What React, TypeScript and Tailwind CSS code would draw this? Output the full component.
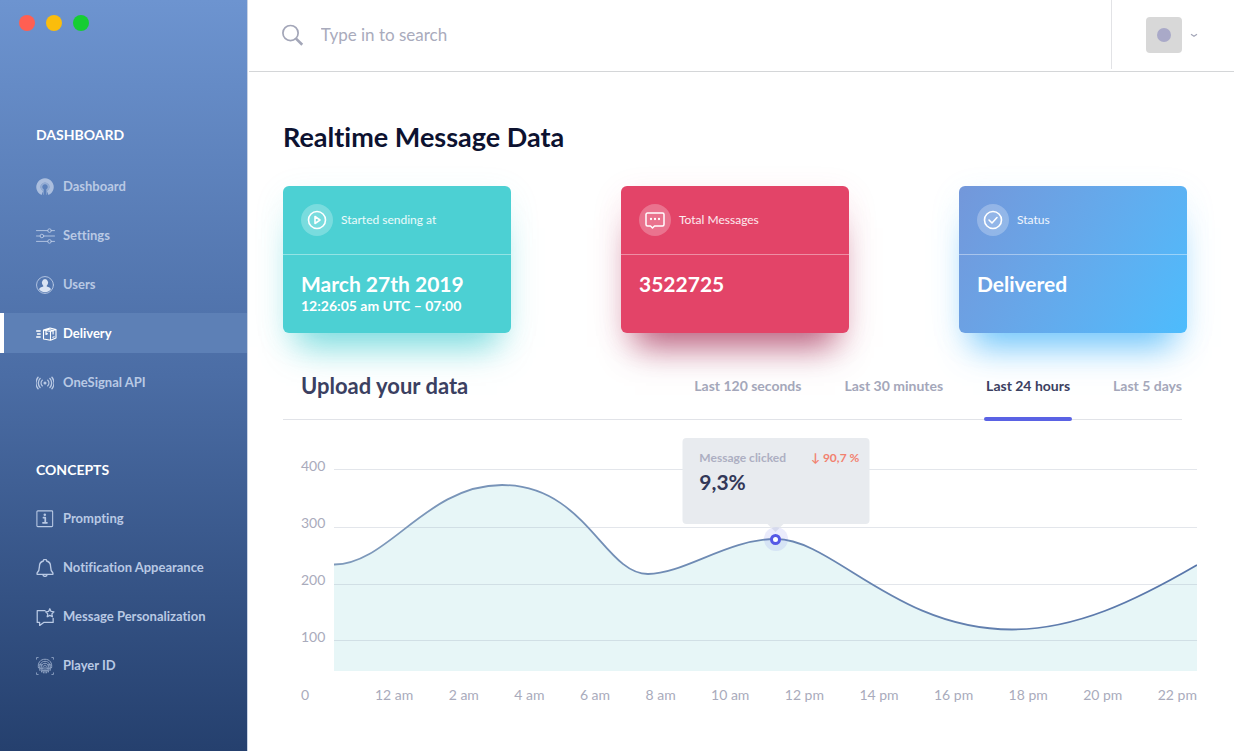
import React from "react";

type IconProps = { children: React.ReactNode; className?: string };

function Icon({ children, className = "size-[18px]" }: IconProps) {
  return (
    <svg
      viewBox="0 0 20 20"
      fill="none"
      stroke="currentColor"
      strokeLinecap="round"
      strokeLinejoin="round"
      aria-hidden="true"
      className={`shrink-0 ${className}`}
    >
      {children}
    </svg>
  );
}

const SignalLogo = () => (
  <Icon className="size-[18px]">
    <path
      d="M6.200 19A9.700 9.700 0 1 1 13.800 19L12.100 14.500A5 5 0 1 0 7.900 14.500Z"
      fill="currentColor"
      stroke="none"
      opacity="0.85"
    />
    <path
      d="M8.600 18.500V12.500A3 3 0 1 1 11.400 12.500V18.500H12.100V14.500A5 5 0 1 0 7.900 14.500V18.500Z"
      fill="currentColor"
      stroke="none"
      opacity="0.6"
    />
  </Icon>
);

const Sliders = () => (
  <Icon className="h-[18px] w-[19px]">
    <path d="M0 4h12.500M16.500 4H20M0 10h4M8 10H20M0 16h12.500M16.500 16H20" />
    <circle cx="14.500" cy="4" r="2" />
    <circle cx="6" cy="10" r="2" />
    <circle cx="14.500" cy="16" r="2" />
  </Icon>
);

const User = () => (
  <Icon>
    <circle cx="10" cy="10" r="9.400" />
    <path
      d="M10 3.300a3.700 4.100 0 0 1 1.900 7.400v1.100c2.400.5 4.200 1.400 4.700 3a8.200 8.200 0 0 1-13.200 0c.5-1.600 2.300-2.500 4.700-3v-1.100A3.700 4.100 0 0 1 10 3.300Z"
      fill="#dbe4f3"
      stroke="none"
    />
  </Icon>
);

const Parcel = () => (
  <svg
    viewBox="0 0 22 18"
    fill="none"
    stroke="currentColor"
    strokeLinecap="round"
    strokeLinejoin="round"
    aria-hidden="true"
    className="h-[18px] w-[22px] shrink-0"
  >
    <path d="M.6 6h3.600M1.500 9h2.700M.6 12h3.600" strokeWidth="1.300" />
    <path
      d="M7.500 5 14 3l6 1.600V13l-5.500 2.300L7.500 14ZM7.500 5l7 1.500L20 4.600M14.500 6.500v8.800M10.800 4l6.300 1.600V9M13 3.500 10 5.500v4l1.500-.8M16.800 12.300l1.400-.6"
      strokeWidth="1.100"
    />
  </svg>
);

const Broadcast = () => (
  <Icon>
    <circle cx="10" cy="10" r="1.700" fill="currentColor" stroke="none" />
    <path
      d="M7 6.800a4.600 4.600 0 0 0 0 6.400M13 6.800a4.600 4.600 0 0 1 0 6.400M4.600 4.900a7.500 7.500 0 0 0 0 10.200M15.400 4.900a7.500 7.500 0 0 1 0 10.200M2.300 3.600a10.500 10.500 0 0 0 0 12.800M17.700 3.600a10.500 10.500 0 0 1 0 12.800"
      strokeWidth="1.500"
    />
  </Icon>
);

const Info = () => (
  <Icon>
    <rect x="1" y="1" width="17.500" height="17.500" rx="1" strokeWidth="1.200" />
    <path d="M8.300 8.500h2v5.500M7.700 14.200h4.500" strokeWidth="1.900" />
    <circle cx="9.800" cy="5.300" r="1.400" fill="currentColor" stroke="none" />
  </Icon>
);

const Bell = () => (
  <Icon>
    <path
      d="M8.200 2.200a1.800 1.800 0 0 1 3.600 0c3 .8 4.400 3.200 4.400 6 0 4.200.8 5.600 2.600 7.400v1.400H1.200v-1.400c1.800-1.800 2.600-3.200 2.600-7.400 0-2.800 1.400-5.200 4.400-6M7.700 17a2.300 2.300 0 0 0 4.600 0"
      strokeWidth="1.500"
    />
  </Icon>
);

const StarMessage = () => (
  <Icon className="h-[18px] w-[19px]">
    <path d="M9.500 3H.8v13h2.700v3.500L8 16h10.500v-4.500" strokeWidth="1.400" />
    <path
      d="m14.800.8 1.400 3 3.200.4-2.300 2.300.6 3.300-2.900-1.600-2.900 1.600.6-3.300-2.300-2.300 3.200-.4Z"
      strokeWidth="1.400"
    />
  </Icon>
);

const Fingerprint = () => (
  <Icon className="size-[18px] opacity-70">
    <path d="M.6 2.400V.6H2.400M17.600 .6h1.800V2.400M19.400 17.600v1.800H17.600M2.400 19.400H.6V17.600" />
    <path
      d="M2.700 12C1.500 6.500 5 2.500 10 2.500S18.500 6.500 17.300 12M4.300 15C3 9 5.500 4.800 10 4.800S17 9 15.700 15M6.300 16.800C4.700 11 6 7 10 7s5.300 4 3.700 9.800M8.300 17.700C7 12.500 7.500 9.200 10 9.200s3 3.300 1.700 8.500M10 11.200v6.500M3.200 8.700h4M12.800 8.700h4M4.500 12.500h3.500M12 12.500h3.500M6.500 15.300h7"
      strokeWidth="1.100"
    />
  </Icon>
);

const sections = [
  {
    title: "DASHBOARD",
    gap: "mt-[21px]",
    items: [
      { label: "Dashboard", icon: <SignalLogo /> },
      { label: "Settings", icon: <Sliders /> },
      { label: "Users", icon: <User /> },
      { label: "Delivery", icon: <Parcel />, active: true },
      { label: "OneSignal API", icon: <Broadcast /> },
    ],
  },
  {
    title: "CONCEPTS",
    gap: "mt-[18px]",
    items: [
      { label: "Prompting", icon: <Info /> },
      { label: "Notification Appearance", icon: <Bell /> },
      { label: "Message Personalization", icon: <StarMessage /> },
      { label: "Player ID", icon: <Fingerprint /> },
    ],
  },
];

function Sidebar() {
  return (
    <aside className="flex w-[248px] shrink-0 flex-col border-r border-[#c9d3e4] bg-linear-to-b from-[#6d94d0] via-[#4b6da5] to-[#25406e]">
      <div className="flex gap-[11px] pt-[15px] pl-[19px]">
        <span className="size-4 rounded-full bg-[#ff5f52]" />
        <span className="size-4 rounded-full bg-[#fbbd0c]" />
        <span className="size-4 rounded-full bg-[#16ce33]" />
      </div>
      <nav className="mt-[94px] flex flex-col gap-[58px]">
        {sections.map((section) => (
          <section key={section.title}>
            <h2 className="pl-9 text-sm leading-5 font-bold text-white">{section.title}</h2>
            <ul className={`flex flex-col gap-[9px] ${section.gap}`}>
              {section.items.map((item) => (
                <li key={item.label}>
                  <a
                    href="#"
                    aria-current={item.active ? "page" : undefined}
                    className={`flex h-10 items-center border-l-4 pt-0.5 pl-8 text-[13px] font-bold ${
                      item.active
                        ? "border-white bg-[#5d80b6] text-white"
                        : "border-transparent text-[#b9c9e4]"
                    }`}
                  >
                    <span className="flex w-[27px] items-center">{item.icon}</span>
                    {item.label}
                  </a>
                </li>
              ))}
            </ul>
          </section>
        ))}
      </nav>
    </aside>
  );
}

function Header() {
  return (
    <header className="ml-px flex h-[72px] border-b border-[#d4d6d8]">
      <label className="flex flex-1 items-center gap-[17px] pb-0.5 pl-8">
        <svg viewBox="0 0 24 24" fill="none" stroke="#a3a6b8" aria-hidden="true" className="size-6">
          <circle cx="10" cy="10" r="8" strokeWidth="1.800" />
          <path d="m15.800 15.800 6.500 6.500" strokeWidth="2.800" />
        </svg>
        <input
          type="search"
          aria-label="Search"
          placeholder="Type in to search"
          className="w-full text-[17px] text-[#a9abbc] outline-none placeholder:text-[#a9abbc]"
        />
      </label>
      <button
        type="button"
        aria-label="Account menu"
        className="mb-0.5 flex w-[123px] items-center gap-2 border-l border-[#e2e3e6] pl-[34px]"
      >
        <span className="flex size-9 items-center justify-center rounded-sm bg-[#d8d8d8]">
          <span className="size-3.5 rounded-full bg-[#a9a9c8]" />
        </span>
        <svg viewBox="0 0 8 8" fill="none" stroke="#a3a6b8" aria-hidden="true" className="size-2">
          <path d="m1 3.300 3 2 3-2" strokeWidth="1.200" />
        </svg>
      </button>
    </header>
  );
}

type CardProps = {
  tone: string;
  label: string;
  value: string;
  detail?: string;
  children: React.ReactNode;
};

function StatCard({ tone, label, value, detail, children }: CardProps) {
  return (
    <article className={`h-[147px] w-[228px] rounded-md text-white ${tone}`}>
      <div className="flex h-[69px] items-center gap-2 border-b border-white/40 pl-[18px]">
        <span className="flex size-8 items-center justify-center rounded-full bg-white/25">
          <Icon className="size-5">{children}</Icon>
        </span>
        <h2 className="text-xs text-white/90">{label}</h2>
      </div>
      <p className="mt-[17px] pl-[18px] text-[21px] leading-6 font-bold">{value}</p>
      {detail && <p className="pl-[18px] text-sm leading-5 font-bold">{detail}</p>}
    </article>
  );
}

const ranges = ["Last 120 seconds", "Last 30 minutes", "Last 24 hours", "Last 5 days"];
const hours = [
  "12 am", "2 am", "4 am", "6 am", "8 am", "10 am",
  "12 pm", "14 pm", "16 pm", "18 pm", "20 pm", "22 pm",
];
const curve =
  "M0 126.500C54 127 92 47 168 47C252 47 270 136 314 136C350 136 394 101 442 101C499 101 562 191.500 678 191.500C742 191.500 801 163 863 127";

function Chart() {
  return (
    <figure className="pr-[37px] pl-[18px]">
      <div className="flex">
        <div className="flex w-[33px] shrink-0 flex-col gap-[37px] pt-[18px] text-sm leading-5 text-[#a9abbc]">
          {[400, 300, 200, 100].map((level) => (
            <span key={level}>{level}</span>
          ))}
        </div>
        <div className="relative flex-1">
          <svg
            viewBox="0 0 863 233"
            preserveAspectRatio="none"
            role="img"
            aria-label="Messages clicked over the last 24 hours"
            className="h-[233px] w-full"
          >
            <defs>
              <linearGradient id="stroke" x1="0" x2="1" y1="0" y2="0">
                <stop offset="0" stopColor="#7f9abb" />
                <stop offset="1" stopColor="#5876aa" />
              </linearGradient>
            </defs>
            <path d={`${curve}V233H0Z`} fill="#e7f6f7" />
            <path
              d="M0 31.500H863M0 89.500H863M0 146.500H863M0 202.500H863"
              stroke="#8e9ab0"
              strokeOpacity="0.25"
              strokeWidth="1"
            />
            <path d={curve} fill="none" stroke="url(#stroke)" strokeWidth="1.800" />
          </svg>
          <div className="absolute top-0 left-[51.2%] h-[86px] w-[187px] -translate-x-1/2 rounded-sm bg-[#e8ebef] pt-3 pr-2.5 pl-[17px]">
            <div className="flex justify-between text-xs leading-4 font-bold">
              <span className="text-[#adafc2]">Message clicked</span>
              <span className="text-[#f2816f]">↓ 90,7 %</span>
            </div>
            <p className="mt-1 text-[21px] leading-6 font-bold text-[#323858]">9,3%</p>
            <span className="absolute top-full left-1/2 size-0 -translate-x-1/2 border-x-8 border-t-8 border-x-transparent border-t-[#e8ebef]" />
          </div>
          <span className="absolute top-[101px] left-[51.2%] flex size-6 -translate-1/2 items-center justify-center rounded-full bg-[#5b5fe8]/12">
            <span className="size-[11px] rounded-full border-3 border-[#5558e6] bg-white" />
          </span>
        </div>
      </div>
      <div className="mt-3.5 flex text-sm leading-5 text-[#a9abbc]">
        <span className="w-[74px] shrink-0">0</span>
        <div className="flex flex-1 justify-between">
          {hours.map((hour) => (
            <span key={hour}>{hour}</span>
          ))}
        </div>
      </div>
    </figure>
  );
}

export default function App() {
  return (
    <div className="flex min-h-screen bg-white font-['Lato','Liberation_Sans',sans-serif] [font-variant-ligatures:none]">
      <Sidebar />
      <div className="min-w-0 flex-1">
        <Header />
        <main className="pl-[35px]">
          <h1 className="pt-[47px] text-[27px] leading-9 font-bold text-[#0d1230]">
            Realtime Message Data
          </h1>
          <div className="mt-[31px] flex justify-between pr-[47px]">
            <StatCard
              tone="bg-[#4cd0d3] shadow-[0_28px_32px_-14px_#4cd0d3b8,0_8px_32px_#4cd0d31a]"
              label="Started sending at"
              value="March 27th 2019"
              detail="12:26:05 am UTC – 07:00"
            >
              <circle cx="10" cy="10" r="8.500" strokeWidth="1.600" />
              <path d="M8 6.500v7l5-3.500Z" strokeWidth="1.600" />
            </StatCard>
            <StatCard
              tone="bg-[#e34468] shadow-[0_28px_32px_-14px_#a83a60c8,0_8px_32px_#e344681a]"
              label="Total Messages"
              value="3522725"
            >
              <path
                d="M2.500 3h15a1.500 1.500 0 0 1 1.500 1.500v10a1.500 1.500 0 0 1-1.500 1.500H9.500L7.500 18 5.500 16h-3A1.500 1.500 0 0 1 1 14.500v-10A1.500 1.500 0 0 1 2.500 3Z"
                strokeWidth="1.500"
              />
              <path d="M6 9h.01M10 9h.01M14 9h.01" strokeWidth="2.300" />
            </StatCard>
            <StatCard
              tone="bg-linear-120 from-[#7397da] to-[#4cbcfd] shadow-[0_28px_32px_-14px_#4cb8fac8,0_8px_32px_#4cb8fa1a]"
              label="Status"
              value="Delivered"
            >
              <circle cx="10" cy="10" r="8.500" strokeWidth="1.600" />
              <path d="m6 10 3 3 5-5.500" strokeWidth="1.600" />
            </StatCard>
          </div>
          <div className="relative mt-[33px] mr-[52px] flex h-[54px] justify-between border-b border-[#e1e3e8] pl-[18px]">
            <h2 className="pt-1 text-[22px] leading-8 font-bold text-[#3b4061]">Upload your data</h2>
            <div role="tablist" className="flex gap-[43px]">
              {ranges.map((range) => {
                const selected = range === "Last 24 hours";
                return (
                  <button
                    key={range}
                    type="button"
                    role="tab"
                    aria-selected={selected}
                    className={`relative pb-[13px] text-sm font-bold ${
                      selected ? "text-[#3b4061]" : "text-[#a4a7ba]"
                    }`}
                  >
                    {range}
                    {selected && (
                      <span className="absolute -inset-x-0.5 -bottom-0.5 h-1 rounded-full bg-[#5a62e4]" />
                    )}
                  </button>
                );
              })}
            </div>
          </div>
          <div className="mt-[18px]">
            <Chart />
          </div>
        </main>
      </div>
    </div>
  );
}
